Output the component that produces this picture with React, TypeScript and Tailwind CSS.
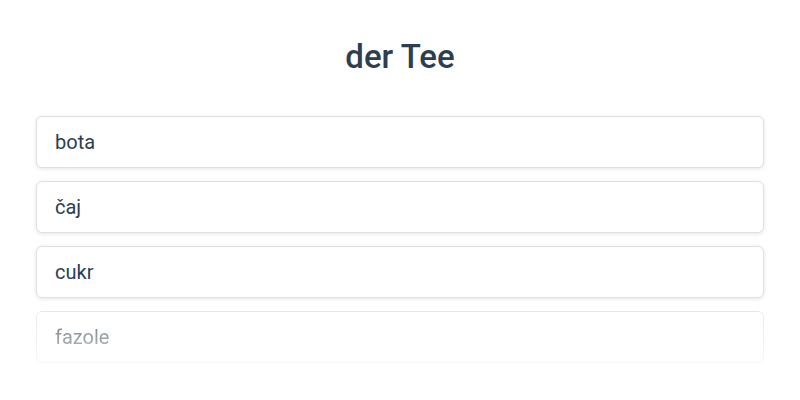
const words = ["bota", "čaj", "cukr", "fazole"];

export default function App() {
  return (
    <div className="min-h-[400px] bg-white px-9 font-['Roboto',sans-serif] text-[#2c3e50]">
      <h1 className="pt-[37px] text-center text-[33px] font-medium leading-[40px]">
        der Tee
      </h1>
      <div className="mt-[39px] flex flex-col gap-[13px]">
        {words.map((word, i) => (
          <div
            key={word}
            className={`flex h-[52px] items-center rounded-md border border-[#e0e0e0] bg-white px-[18px] text-[20px] shadow-[0_1px_4px_rgba(0,0,0,0.1)] ${
              i === words.length - 1
                ? "[mask-image:linear-gradient(to_bottom,rgba(0,0,0,0.75),rgba(0,0,0,0.25))]"
                : ""
            }`}
          >
            {word}
          </div>
        ))}
      </div>
    </div>
  );
}
